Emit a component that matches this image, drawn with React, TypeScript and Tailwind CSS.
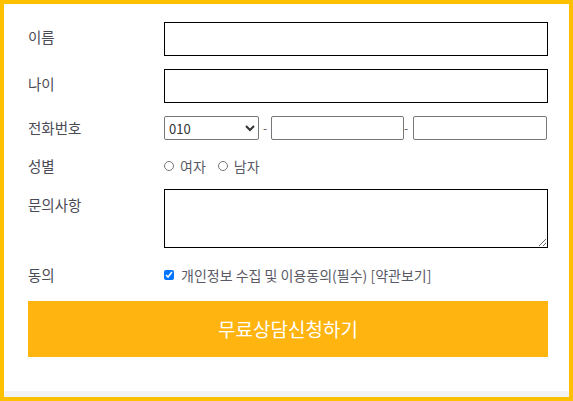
import React from "react"

const font = { fontFamily: '"Noto Sans CJK KR", "Noto Sans", sans-serif' }

const Label: React.FC<{ text: string; className?: string }> = ({ text, className }) => (
  <div className={`w-[136px] shrink-0 text-[14.5px] text-[#4a4a55] ${className ?? ""}`}>{text}</div>
)

const App: React.FC = () => {
  return (
    <div
      className="w-[573px] h-[401px] border-4 border-[#ffc000] bg-[#f3f3f3] flex flex-col"
      style={font}
    >
      <div className="bg-white h-[387px] pl-6 pr-[21px] pt-[18px] flex flex-col">
        <div className="flex items-center h-[34px]">
          <Label text="이름" className="-mt-[4px]" />
          <input className="w-[384px] shrink-0 h-[34px] border border-black outline-none px-2 text-sm" />
        </div>

        <div className="flex items-center h-[34px] mt-[13px]">
          <Label text="나이" className="-mt-[5px]" />
          <input className="w-[384px] shrink-0 h-[34px] border border-black outline-none px-2 text-sm" />
        </div>

        <div className="flex items-center h-[24px] mt-[13px]">
          <Label text="전화번호" />
          <select className="w-[95px] shrink-0 h-[24px] border border-[#767676] rounded-[2px] text-[13px] text-[#333] bg-white pl-0">
            <option>010</option>
            <option>011</option>
            <option>016</option>
          </select>
          <span className="text-[12px] text-[#555] w-[12px] text-center">-</span>
          <input className="w-[133px] shrink-0 h-[24px] border border-[#767676] rounded-[2px] outline-none px-1 text-[12px]" />
          <span className="text-[12px] text-[#555] w-[9px] text-left">-</span>
          <input className="w-[134px] shrink-0 h-[24px] border border-[#767676] rounded-[2px] outline-none px-1 text-[12px]" />
        </div>

        <div className="flex items-center h-[20px] mt-[16px]">
          <Label text="성별" />
          <label className="flex items-center text-[14px] text-[#5a5a66]">
            <input type="radio" name="g" className="w-[10px] h-[10px] m-0 mr-[6px]" />
            여자
          </label>
          <label className="flex items-center text-[14px] text-[#5a5a66] ml-[12px]">
            <input type="radio" name="g" className="w-[10px] h-[10px] m-0 mr-[6px]" />
            남자
          </label>
        </div>

        <div className="flex items-start mt-[13px]">
          <Label text="문의사항" className="pt-[5px]" />
          <textarea className="w-[384px] shrink-0 h-[59px] border border-black outline-none p-1 text-sm block" />
        </div>

        <div className="flex items-center h-[18px] mt-[18px]">
          <Label text="동의" />
          <label className="flex items-center text-[14px] text-[#5a5a66] whitespace-nowrap">
            <input type="checkbox" defaultChecked className="w-[10px] h-[10px] m-0 mr-[7px]" />
            개인정보 수집 및 이용동의(필수) [약관보기]
          </label>
        </div>

        <button className="mt-[17px] w-[520px] h-[56px] bg-[#ffb40f] text-white text-[19px] flex items-center justify-center">
          무료상담신청하기
        </button>
      </div>
    </div>
  )
}

export default App
